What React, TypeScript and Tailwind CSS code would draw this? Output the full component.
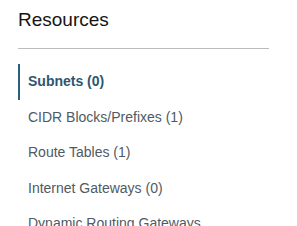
const items = [
  { label: 'Subnets (0)', active: true },
  { label: 'CIDR Blocks/Prefixes (1)' },
  { label: 'Route Tables (1)' },
  { label: 'Internet Gateways (0)' },
  { label: 'Dynamic Routing Gateways' },
];

export default function App() {
  return (
    <div className="h-[226px] overflow-hidden bg-white pl-[18px] pt-[9px] font-['Liberation_Sans',Arial,sans-serif]">
      <div className="w-[251px]">
        <h2 className="text-[19px] leading-[22px] text-[#161513]">Resources</h2>
        <div className="mt-[17px] h-px bg-[#bcbcbc]"></div>
        <ul className="mt-[15px]">
          {items.map((it) => (
            <li
              key={it.label}
              className={
                it.active
                  ? 'flex h-[35.5px] items-center border-l-2 border-[#2a5f80] pl-2 text-[14px] font-bold text-[#2d5670]'
                  : 'flex h-[35.5px] items-center border-l-2 border-transparent pl-2 text-[14px] text-[#4f5a64]'
              }
            >
              {it.label}
            </li>
          ))}
        </ul>
      </div>
    </div>
  );
}
